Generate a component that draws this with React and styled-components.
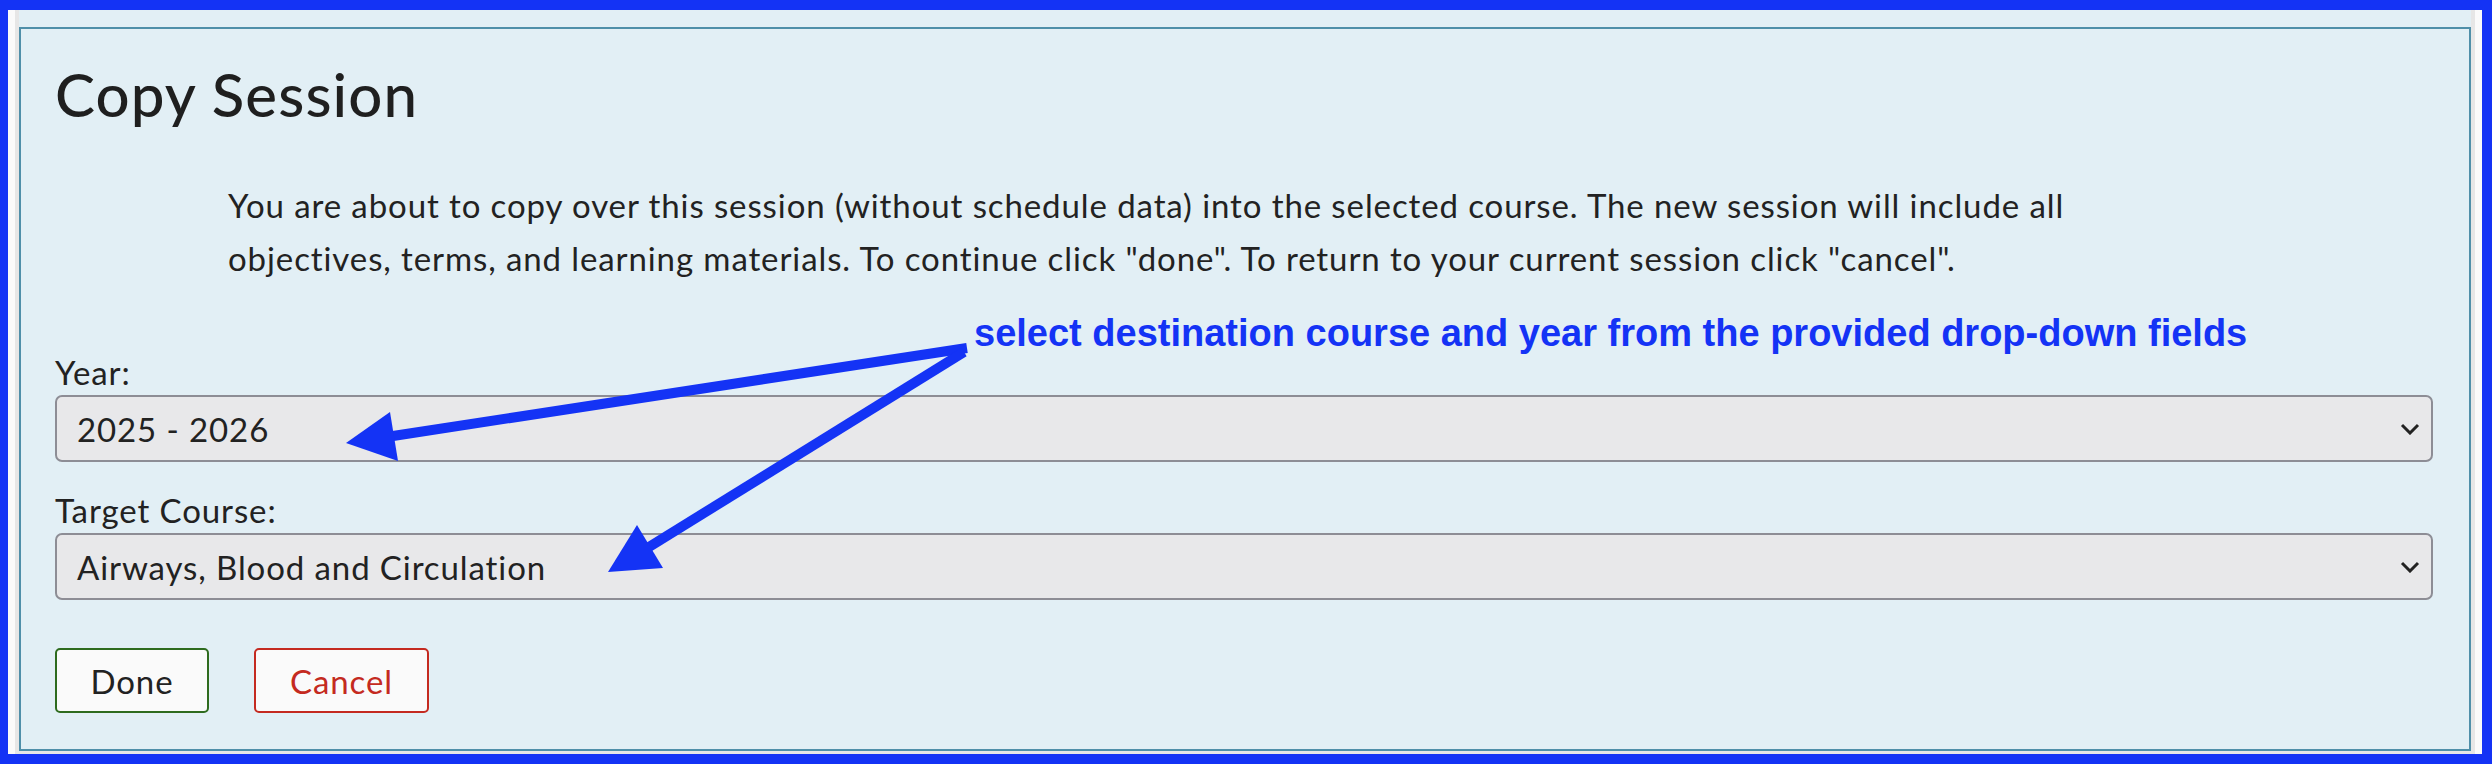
import React from "react";
import styled, { createGlobalStyle } from "styled-components";

const years = ["2025 - 2026"];
const courses = ["Airways, Blood and Circulation"];

export default function App() {
  return (
    <>
      <GlobalStyle />
      <Frame>
        <Viewport>
          <Canvas>
            <Panel>
              <Title>Copy Session</Title>
              <Intro>
                You are about to copy over this session (without schedule data) into the selected course. The new session will include all
                <br />
                objectives, terms, and learning materials. To continue click "done". To return to your current session click "cancel".
              </Intro>

              <FieldLabel $first>Year:</FieldLabel>
              <SelectBox>
                <span>{years[0]}</span>
                <Chevron />
              </SelectBox>

              <FieldLabel>Target Course:</FieldLabel>
              <SelectBox>
                <span>{courses[0]}</span>
                <Chevron />
              </SelectBox>

              <ButtonRow>
                <ActionButton $tone="done" $width={154}>Done</ActionButton>
                <ActionButton $tone="cancel" $width={175}>Cancel</ActionButton>
              </ButtonRow>

              <Callout>select destination course and year from the provided drop-down fields</Callout>
            </Panel>
          </Canvas>
        </Viewport>
        <Arrows />
      </Frame>
    </>
  );
}

function Chevron() {
  return (
    <ChevronSvg viewBox="0 0 20 12" width="20" height="12">
      <polyline points="2,2 10,10 18,2" fill="none" stroke="#222" strokeWidth="3" />
    </ChevronSvg>
  );
}

function Arrows() {
  return (
    <ArrowLayer viewBox="0 0 2492 764" width="2492" height="764">
      <line x1="967" y1="348" x2="393" y2="436" stroke="#1433f5" strokeWidth="10" />
      <polygon points="346,443 390,412 398,461" fill="#1433f5" />
      <line x1="964" y1="352" x2="649" y2="547" stroke="#1433f5" strokeWidth="10" />
      <polygon points="608,572 637,525 663,568" fill="#1433f5" />
    </ArrowLayer>
  );
}

const GlobalStyle = createGlobalStyle`
  html, body {
    margin: 0;
    padding: 0;
    background: #1433f5;
  }
  body {
    font-family: Lato, "Noto Sans", sans-serif;
  }
  * {
    box-sizing: border-box;
  }
`;

const Frame = styled.div`
  position: relative;
  display: flex;
  width: 2492px;
  height: 764px;
  padding: 10px 10px 10px 8px;
  background: #1433f5;
`;

const Viewport = styled.div`
  flex: 1;
  display: flex;
  padding: 0 7px;
  background: #fafafa;
`;

const Canvas = styled.div`
  flex: 1;
  display: flex;
  flex-direction: column;
  padding-top: 17px;
  background: #e2eff5;
  border-left: 4px solid #e6e6e6;
  border-right: 4px solid #e6e6e6;
  border-bottom: 4px solid #e6e6e6;
`;

const Panel = styled.section`
  position: relative;
  flex: 1;
  display: flex;
  flex-direction: column;
  align-items: stretch;
  padding: 29px 36px 36px 34px;
  background: #e2eff5;
  border: 2px solid #4f8fa9;
  color: #222;
`;

const Title = styled.h1`
  margin: 0;
  font-size: 60px;
  line-height: 72px;
  font-weight: 500;
  letter-spacing: 1.1px;
  color: #1f1f1f;
`;

const Intro = styled.p`
  margin: 49px 0 0;
  padding-left: 173px;
  font-size: 33px;
  line-height: 52.5px;
  letter-spacing: 0.9px;
`;

const FieldLabel = styled.label`
  display: block;
  margin-top: ${(p) => (p.$first ? "69px" : "29px")};
  font-size: 33px;
  line-height: 38px;
  letter-spacing: 0.9px;
`;

const SelectBox = styled.div`
  display: flex;
  align-items: center;
  justify-content: space-between;
  height: 67px;
  margin-top: 4px;
  padding: 0 11px 0 20px;
  background: #e8e8ea;
  border: 2px solid #8d8d95;
  border-radius: 7px;
  font-size: 33px;
  letter-spacing: 0.9px;
  color: #222;
`;

const ChevronSvg = styled.svg`
  display: block;
  flex: none;
`;

const ButtonRow = styled.div`
  display: flex;
  gap: 45px;
  margin-top: 48px;
`;

const ActionButton = styled.button`
  width: ${(p) => p.$width}px;
  height: 65px;
  padding: 0;
  font-family: inherit;
  font-size: 33px;
  letter-spacing: 0.9px;
  background: #fafafa;
  border-radius: 5px;
  border: 2px solid ${(p) => (p.$tone === "done" ? "#2e6b1e" : "#c42a20")};
  color: ${(p) => (p.$tone === "done" ? "#222" : "#c42a20")};
  cursor: pointer;
`;

const Callout = styled.div`
  position: absolute;
  left: 953px;
  top: 285px;
  font-family: "Liberation Sans", Arial, sans-serif;
  font-weight: 700;
  font-size: 38px;
  line-height: 1;
  color: #1433f5;
  white-space: nowrap;
`;

const ArrowLayer = styled.svg`
  position: absolute;
  top: 0;
  left: 0;
  pointer-events: none;
`;
